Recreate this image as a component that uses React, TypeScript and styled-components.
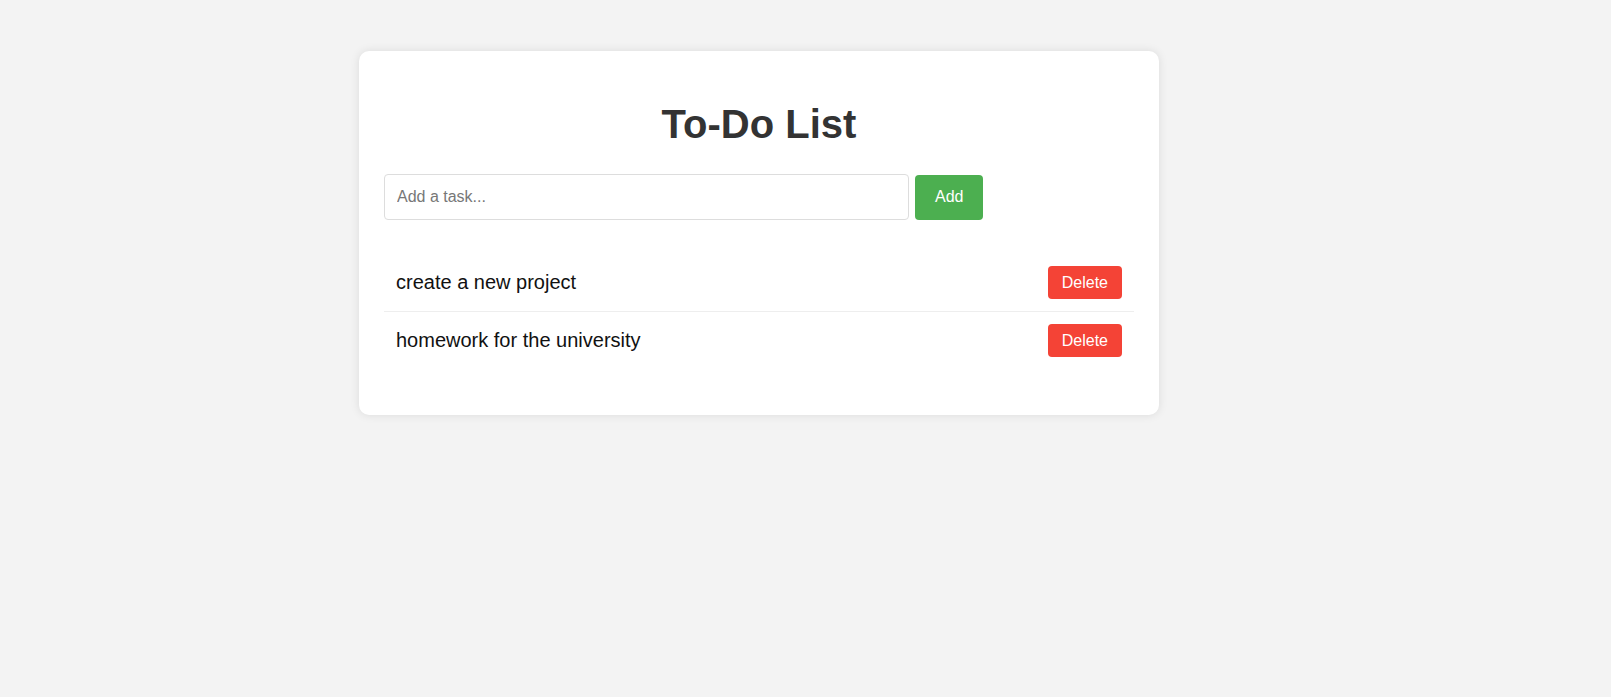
import React, { useState } from "react";
import styled, { createGlobalStyle } from "styled-components";

const GlobalStyle = createGlobalStyle`
  html, body {
    margin: 0;
    padding: 0;
    background: #f3f3f3;
    font-family: "Liberation Sans", Arial, sans-serif;
  }
`;

const Page = styled.div`
  display: flex;
  align-items: flex-start;
  padding: 51px 0 0 359px;
  min-height: 100vh;
  box-sizing: border-box;
`;

const Card = styled.div`
  width: 800px;
  box-sizing: border-box;
  padding: 20px 25px;
  background: #ffffff;
  border-radius: 10px;
  box-shadow: 0 0 10px rgba(0, 0, 0, 0.1);
`;

const Title = styled.h1`
  margin: 31px 0 27px;
  text-align: center;
  font-size: 40px;
  font-weight: 700;
  color: #333333;
`;

const Form = styled.form`
  display: flex;
  align-items: center;
  gap: 6px;
  margin: 0 0 34px;
`;

const Input = styled.input`
  width: 70%;
  height: 46px;
  box-sizing: border-box;
  padding: 0 12px;
  border: 1px solid #dddddd;
  border-radius: 4px;
  font-family: inherit;
  font-size: 16px;
  color: #333;
  outline: none;
  &::placeholder {
    color: #777777;
  }
`;

const AddButton = styled.button`
  height: 45px;
  padding: 0 20px;
  border: none;
  border-radius: 4px;
  background: #4caf50;
  color: #ffffff;
  font-family: inherit;
  font-size: 16px;
  cursor: pointer;
`;

const List = styled.ul`
  list-style: none;
  margin: 0 0 26px;
  padding: 0;
`;

const Item = styled.li`
  display: flex;
  align-items: center;
  justify-content: space-between;
  padding: 12px;
  border-bottom: 1px solid #eeeeee;
  font-size: 20px;
  color: #111111;
  &:last-child {
    border-bottom: none;
  }
`;

const DeleteButton = styled.button`
  padding: 8px 14px;
  line-height: 17px;
  border: none;
  border-radius: 4px;
  background: #f44336;
  color: #ffffff;
  font-family: inherit;
  font-size: 16px;
  cursor: pointer;
`;

export default function App() {
  const [tasks, setTasks] = useState<string[]>([
    "create a new project",
    "homework for the university",
  ]);
  const [text, setText] = useState("");

  const add = (e: React.FormEvent) => {
    e.preventDefault();
    if (!text.trim()) return;
    setTasks([...tasks, text.trim()]);
    setText("");
  };

  return (
    <>
      <GlobalStyle />
      <Page>
        <Card>
          <Title>To-Do List</Title>
          <Form onSubmit={add}>
            <Input
              placeholder="Add a task..."
              value={text}
              onChange={(e) => setText(e.target.value)}
            />
            <AddButton type="submit">Add</AddButton>
          </Form>
          <List>
            {tasks.map((t, i) => (
              <Item key={i}>
                <span>{t}</span>
                <DeleteButton
                  onClick={() => setTasks(tasks.filter((_, j) => j !== i))}
                >
                  Delete
                </DeleteButton>
              </Item>
            ))}
          </List>
        </Card>
      </Page>
    </>
  );
}
